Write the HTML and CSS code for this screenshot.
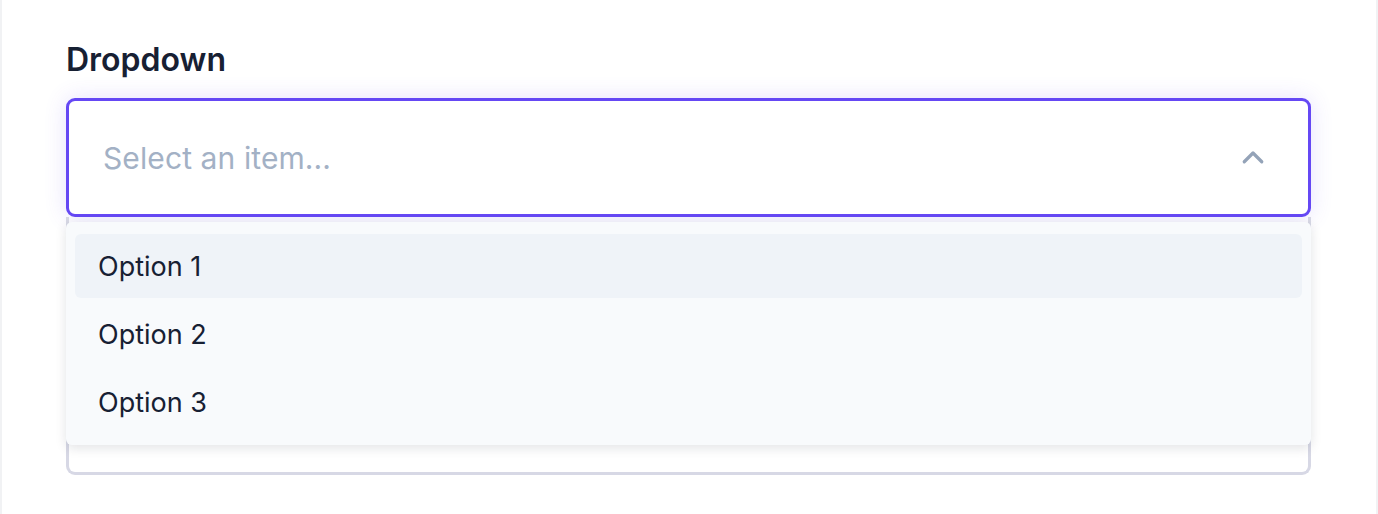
FILE: index.html
```html
<!DOCTYPE html>
<html>

<head>
    <meta charset="UTF-8">
    <title>Dropdown</title>
    <link rel="stylesheet" href="styles.css">
</head>

<body>
    <div class="page">
        <div class="field">
            <label class="label">Dropdown</label>
            <div class="select">
                <div class="control">
                    <span class="placeholder">Select an item...</span>
                    <svg class="chevron" width="30" height="30" viewBox="0 0 24 24" fill="none">
                        <path d="M5 15l7-7 7 7" stroke="#94a3b8" stroke-width="2.6" stroke-linecap="round" stroke-linejoin="round" />
                    </svg>
                </div>
                <div class="under"></div>
                <ul class="menu">
                    <li class="item active">Option 1</li>
                    <li class="item">Option 2</li>
                    <li class="item">Option 3</li>
                </ul>
            </div>
        </div>
    </div>
</body>

</html>
```

FILE: styles.css
```css
* {
    margin: 0;
    padding: 0;
    box-sizing: border-box;
}

body {
    background: #f1f2f4;
    font-family: Inter, "Noto Sans", sans-serif;
}

.page {
    margin: 0 2px;
    height: 514px;
    background: #fff;
    padding: 43px 65px 0 64px;
}

.label {
    display: block;
    font-size: 32px;
    font-weight: 600;
    color: #172033;
    line-height: 34px;
    margin-bottom: 21px;
}

.select {
    position: relative;
}

.control {
    height: 119px;
    border: 3px solid #6548f4;
    border-radius: 9px;
    background: #fff;
    box-shadow: 0 0 22px rgba(101, 72, 244, 0.16);
    display: flex;
    align-items: center;
    justify-content: space-between;
    padding: 0 40px 0 34px;
}

.placeholder {
    font-size: 30px;
    color: #a3b1c5;
    letter-spacing: 0.1px;
}

.chevron {
    display: block;
}

.under {
    height: 258px;
    border: 3px solid #d7d8e5;
    border-top: none;
    border-radius: 0 0 9px 9px;
}

.menu {
    position: absolute;
    left: 0;
    right: 0;
    top: 124px;
    list-style: none;
    background: #f8fafc;
    border-radius: 6px;
    box-shadow: 0 3px 12px rgba(15, 23, 42, 0.12);
    padding: 12px 9px 11px;
    display: flex;
    flex-direction: column;
    gap: 4px;
}

.item {
    height: 64px;
    display: flex;
    align-items: center;
    padding-left: 23px;
    font-size: 27px;
    color: #172033;
    border-radius: 6px;
}

.item.active {
    background: #eff3f8;
}
```
